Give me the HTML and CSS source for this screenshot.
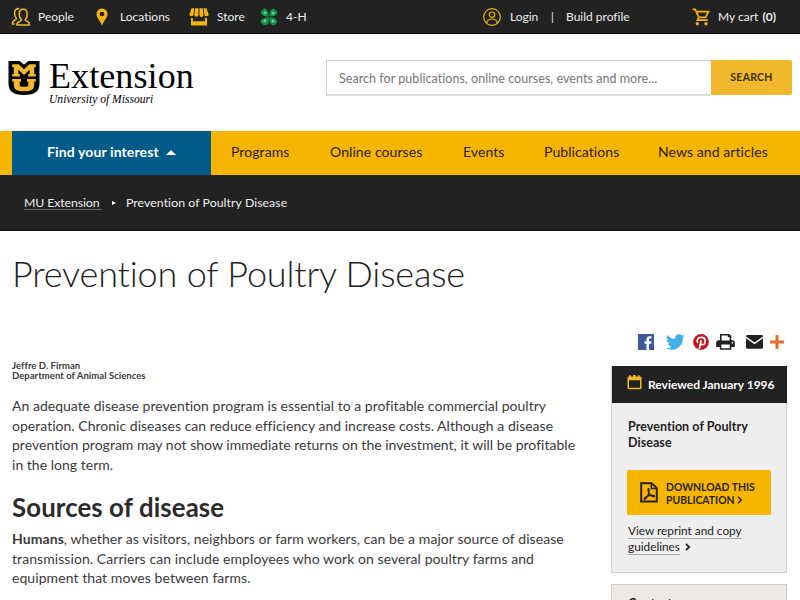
FILE: index.html
```html
<!DOCTYPE html>
<html lang="en">
<head>
<meta charset="utf-8">
<title>Prevention of Poultry Disease</title>
<link rel="stylesheet" href="styles.css">
</head>
<body>
<div class="topbar">
  <a class="top-link people">
    <svg class="icon" width="20" height="20" viewBox="0 0 20 20" fill="none" stroke="#f1b82d" stroke-width="1.5" stroke-linejoin="round"><path d="M9 14.2c1-.5 1.400-.8 1.400-1.500C9.200 11.700 8.200 9.800 8.200 7c0-2.700 1.500-4.800 4-4.800s4 2.100 4 4.800c0 2.800-.8 4.500-2 5.700 0 1 1 1.300 2.300 1.800 1.500.6 2 1.300 2 3.500H5.800c0-2.200.7-3 3.200-3.800z"/><path d="M8.300 1.800C5.500 1 3.600 3.200 3.600 6c0 2.700.7 4.300 1.800 5.400 0 1-.6 1.300-1.900 1.900C2 14 1.300 14.900 1.300 17h2.400"/></svg>
    <span>People</span></a>
  <a class="top-link locations">
    <svg class="icon" width="12" height="18" viewBox="0 0 12 18"><path fill="#f1b310" fill-rule="evenodd" d="M6 .5A5.500 5.500 0 0 0 .5 6C.5 10 3.500 11.500 6 17.500 8.500 11.500 11.500 10 11.500 6A5.500 5.500 0 0 0 6 .5zm0 3.200a2.300 2.300 0 1 1 0 4.600 2.300 2.300 0 0 1 0-4.600z"/></svg>
    <span>Locations</span></a>
  <a class="top-link store">
    <svg class="icon" width="20" height="18" viewBox="0 0 20 18" fill="#f1b310"><path d="M2.600.3h2.700L4.500 7a2.200 2.200 0 0 1-4.200-.6zM6.200.3h3.200V7a2.100 2.100 0 0 1-4.100 0zM10.400.3h3.300l.9 6.700a2.100 2.100 0 0 1-4.200 0zM14.600.3h2.800l2.300 6.100A2.200 2.200 0 0 1 15.500 7z"/><path fill-rule="evenodd" d="M2 10h1.900v3.300h12V10H18v7.600H2z"/></svg>
    <span>Store</span></a>
  <a class="top-link fourh">
    <svg class="icon" width="18" height="18" viewBox="0 0 18 18"><g fill="#119447"><path id="leaf" d="M8.600 8.600C5 8.700.8 7.500.8 4.600c0-1.200.7-1.900 1.600-2C2.300 1.400 3.200.6 4.500.6c2.800 0 4.100 4 4.100 8z"/><use href="#leaf" transform="rotate(90 9 9)"/><use href="#leaf" transform="rotate(180 9 9)"/><use href="#leaf" transform="rotate(270 9 9)"/></g><path d="M8.800 9q0 5-1.800 8" stroke="#119447" fill="none"/><g stroke="#cdebd6" stroke-width=".8"><path id="h" d="M3.600 4.900l1.600-1.600M5 6.300l1.600-1.600M4.300 5.600L5.900 4"/><use href="#h" transform="rotate(90 9 9)"/><use href="#h" transform="rotate(180 9 9)"/><use href="#h" transform="rotate(270 9 9)"/></g></svg>
    <span>4-H</span></a>
  <a class="top-link login">
    <svg class="icon" width="18" height="18" viewBox="0 0 18 18" fill="none" stroke="#f1b310" stroke-width="1.200"><circle cx="9" cy="9" r="8.300"/><circle cx="9" cy="6.700" r="2.700"/><path d="M3.700 15.200c.2-3 2.500-4.200 5.300-4.200s5.100 1.200 5.300 4.200"/></svg>
    <span>Login</span></a>
  <span class="divider">|</span>
  <a class="profile">Build profile</a>
  <a class="top-link cart">
    <svg class="icon" width="18" height="18" viewBox="0 0 18 18"><path d="M.6 1.400h2.600l3.700 8h6.600l3-5.700H4.400M6.900 9.400l-1.500 2.800h10.400" fill="none" stroke="#f1b310" stroke-width="1.700"/><g fill="#f1b310"><circle cx="5.300" cy="15.700" r="1.700"/><circle cx="14" cy="15.700" r="1.700"/></g></svg>
    <span>My cart <b>(0)</b></span></a>
</div>

<header class="header">
  <a class="brand">
    <svg class="shield" width="32" height="36" viewBox="0 0 32 36"><path d="M.5 1h11l4.500 3.500L20.500 1h11v22.500c0 8-5 11.500-15.500 11.500S.5 31.500.5 23.500z"/><g fill="#f1b82d"><path d="M4.200 4.200h6.300L16 9.200l5.500-5h6.300v3h-1.600v6.800h1.600v2.600h-7.600V14h1.500V9.800L16 15l-5.700-5.200V14h1.500v2.600H4.200V14h1.600V7.200H4.200z"/><path d="M4.200 19h8.800v2.800h-1.400v3.200c0 1.300 1.300 1.800 4.400 1.800s4.400-.5 4.400-1.800v-3.200H19V19h8.800v2.800h-1.600v3.600c0 4.200-4 5.900-10.200 5.900S5.800 29.600 5.800 25.400v-3.600H4.200z"/></g></svg>
    <span class="wordmark"><span class="name">Extension</span><span class="school">University of Missouri</span></span>
  </a>
  <form class="search">
    <div class="search-field">Search for publications, online courses, events and more...</div>
    <div class="search-button">SEARCH</div>
  </form>
</header>

<nav class="nav">
  <a class="interest"><span>Find your interest</span><i class="caret"></i></a>
  <a class="n1">Programs</a><a class="n2">Online courses</a><a class="n3">Events</a><a class="n4">Publications</a><a class="n5">News and articles</a>
</nav>

<div class="crumbs"><a class="crumb-link">MU Extension</a><i class="crumb-arrow"></i><span class="crumb-here">Prevention of Poultry Disease</span></div>

<h1 class="title"><span>Prevention of Poultry Disease</span></h1>

<div class="page">
  <main class="content">
    <div class="author">Jeffre D. Firman<br>Department of Animal Sciences</div>
    <p class="copy">An adequate disease prevention program is essential to a profitable commercial poultry<br>operation. Chronic diseases can reduce efficiency and increase costs. Although a disease<br>prevention program may not show immediate returns on the investment, it will be profitable<br>in the long term.</p>
    <h2 class="section-title">Sources of disease</h2>
    <p class="copy"><b>Humans</b>, whether as visitors, neighbors or farm workers, can be a major source of disease<br>transmission. Carriers can include employees who work on several poultry farms and<br>equipment that moves between farms.</p>
  </main>
  <aside class="side">
    <div class="share">
      <svg class="fb" width="16" height="16" viewBox="0 0 16 16"><path fill="#3c5a99" d="M0 0h16v16H0z"/><path fill="#fff" d="M8.500 16V9.700H6.500V7.300h2V5.500c0-2 1.200-3.200 3.100-3.200.9 0 1.700.1 1.900.1v2.200h-1.300c-1 0-1.200.5-1.200 1.200v1.500h2.400l-.3 2.400H11V16z"/></svg>
      <svg class="tw" width="19" height="16" viewBox="0 0 19 16"><path fill="#3fb1e8" d="M18.800 2.200c-.7.300-1.400.5-2.200.6.800-.5 1.400-1.200 1.700-2.100-.8.400-1.600.8-2.500.9A3.850 3.850 0 0 0 9.200 5.100C6 5 3.200 3.400 1.300 1.100A3.850 3.850 0 0 0 2.500 6.300c-.6 0-1.200-.2-1.800-.5 0 1.900 1.300 3.500 3.100 3.900-.6.100-1.100.2-1.700.1.500 1.500 1.900 2.600 3.600 2.700A7.800 7.800 0 0 1 0 14.100C1.700 15.200 3.700 15.800 5.900 15.800 13 15.800 17.100 9.800 16.900 4.200c.7-.5 1.400-1.200 1.900-2z"/></svg>
      <svg class="pin" width="16" height="16" viewBox="0 0 16 16"><circle cx="8" cy="8" r="7.900" fill="#c2161f"/><path fill="none" stroke="#fff" stroke-width="1.600" d="M4.800 9C3 6.500 4.800 3.400 8.200 3.400c2.500 0 4 1.500 4 3.500 0 2.300-1.200 3.800-2.800 3.800-1.200 0-1.800-.8-1.900-1.500"/><path fill="none" stroke="#fff" stroke-width="1.700" d="M8.200 6.200L6.200 15"/></svg>
      <svg class="print" width="19" height="16" viewBox="0 0 19 16"><path fill="#222" fill-rule="evenodd" d="M4 0h9.300l2 2v4.200h1.200c1.400 0 2.300.9 2.300 2.200V13h-3.500v2.800H3.800V13H.2V8.400c0-1.300.9-2.200 2.300-2.200H4zm1.600 1.600v4.900h8.100V3.200h-1.900V1.600zM5.400 10.600v3.600h8.300v-3.600zM15.700 8v1.400h1.400V8z"/></svg>
      <svg class="mail" width="17" height="14" viewBox="0 0 17 14"><path fill="#222" d="M1.500 0h14C16.500 0 17 .6 17 1.400L8.500 7.500 0 1.400C0 .6.600 0 1.500 0zM0 3.300l8.500 6 8.500-6v9c0 .9-.6 1.500-1.500 1.500h-14C.6 13.800 0 13.200 0 12.300z"/></svg>
      <svg class="plus" width="14" height="14" viewBox="0 0 14 14"><path fill="#e0702a" d="M5.500 0h3v5.500H14v3H8.500V14h-3V8.500H0v-3h5.500z"/></svg>
    </div>
    <section class="card">
      <div class="card-head">
        <svg class="calendar" width="15" height="15" viewBox="0 0 15 15"><path fill="#f1b82d" fill-rule="evenodd" d="M2.500 0h1.300v1.400h2.400V0h2.500v1.400h2.400V0h1.300v1.400h.6c1 0 1.500.5 1.500 1.400v10c0 .9-.5 1.400-1.500 1.400H2C1 14.200.5 13.700.5 12.800v-10c0-.9.500-1.400 1.500-1.400h.5zM2 5.300v7.400h11V5.300z"/></svg>
        <span>Reviewed January 1996</span></div>
      <div class="card-body">
        <div class="card-title">Prevention of Poultry<br>Disease</div>
        <a class="download">
          <svg width="18" height="21" viewBox="0 0 18 21" fill="none" stroke="#2b2410"><path stroke-width="2" d="M1.200 1.200h10.600l5 5v13.400H1.200z"/><path stroke-width="1.400" d="M11.300 1.500v5h5.200M8.500 6.800c.9 0 .9 3-.5 6.200-1.200 2.800-2.800 4.800-3.700 4.300-1-.7 2.300-3.200 5.400-3.800 2.600-.5 4.900-.2 4.700.8-.3 1.200-3.700-.3-5.300-3.200C8 9 7.600 6.800 8.500 6.800z"/></svg>
          <span>DOWNLOAD THIS<br>PUBLICATION <svg width="6" height="8" viewBox="0 0 6 8" fill="none" stroke="#2b2410" stroke-width="1.600"><path d="M1 .8l3.200 3.200L1 7.200"/></svg></span>
        </a>
        <div class="reprint"><a>View reprint and copy</a><br><a>guidelines</a> <svg width="6" height="8" viewBox="0 0 6 8" fill="none" stroke="#222" stroke-width="1.800"><path d="M1 .8l3.200 3.200L1 7.200"/></svg></div>
      </div>
    </section>
    <section class="card contact"><div class="card-title">Contact us</div></section>
  </aside>
</div>
</body>
</html>
```
FILE: styles.css
```css
* { box-sizing: border-box; }
html, body { height: 600px; overflow: hidden; }
body { margin: 0; background: #fff; color: #3a3a3a; font-family: Lato, "Liberation Sans", sans-serif; font-variant-ligatures: none; white-space: nowrap; }
svg { display: block; flex: none; }
b { font-weight: 700; }

.topbar { display: flex; height: 34px; padding-left: 11px; background: #222; border-bottom: 1px solid #000; color: #eee; font-size: 12px; line-height: 33px; }
.top-link { display: flex; align-items: center; }
.people { width: 85px; gap: 7px; }
.locations { width: 93px; gap: 12px; }
.store { width: 71px; gap: 8px; }
.fourh { width: 223px; gap: 8px; }
.login { width: 68px; gap: 9px; }
.divider { width: 15px; font-size: 11px; }
.profile { width: 126px; }
.cart { gap: 8px; }
.cart b { margin-left: 1px; }

.header { display: flex; height: 97px; padding-left: 8px; }
.brand { display: flex; width: 318px; padding-top: 26px; color: #000; }
.wordmark { display: flex; flex-direction: column; margin-left: 9px; font-family: "Liberation Serif", serif; }
.name { height: 33px; font-size: 36px; line-height: 33px; letter-spacing: .1px; }
.school { font-size: 11.600px; line-height: 13px; font-style: italic; }
.search { display: flex; margin: 26px 0 0; }
.search-field { width: 385px; height: 36px; padding-left: 12px; border: 1px solid #ccc; border-bottom: 2px solid #ddd; border-right: 0; color: #757575; font-size: 12.500px; line-height: 35px; letter-spacing: .05px; }
.search-button { width: 81px; height: 35px; border-radius: 0 2px 2px 0; background: #f1b82d; color: #3c2e10; font-size: 10.500px; font-weight: 700; line-height: 35px; text-align: center; letter-spacing: .25px; }

.nav { display: flex; height: 44px; padding-left: 12px; background: #f5b500; color: #2a1d05; font-size: 14px; line-height: 42px; letter-spacing: .08px; }
.interest { display: flex; align-items: center; width: 199px; padding: 0 0 2px 35px; margin-right: 20px; background: #005b8b; color: #fff; font-weight: 700; letter-spacing: .12px; }
.caret { margin: 1px 0 0 7px; border: 5px solid transparent; border-top: 0; border-bottom: 5px solid #fff; }
.n1 { width: 99px; }
.n2 { width: 133px; }
.n3 { width: 81px; }
.n4 { width: 114px; }

.crumbs { display: flex; align-items: center; height: 56px; padding-left: 24px; background: #222; border-bottom: 1px solid #111; color: #eee; font-size: 12.300px; }
.crumb-link { width: 78px; height: 15px; line-height: 15px; border-bottom: 1px solid #666; letter-spacing: -.1px; }
.crumb-arrow { margin: 0 10px 0 10px; border: 2.500px solid transparent; border-right: 0; border-left: 4px solid #fff; }
.crumb-here { letter-spacing: .06px; }

.title { margin: 0; height: 101px; padding: 20px 0 0 12px; color: #222; font-size: 36px; font-weight: 300; line-height: 44px; letter-spacing: -.17px; }

.page { display: flex; }
.content { width: 611px; padding: 29px 0 0 12px; }
.author { font-size: 9.500px; font-weight: 700; line-height: 10px; letter-spacing: .04px; }
.copy { margin: 0; padding-top: 15px; font-size: 14px; line-height: 19.500px; letter-spacing: .02px; }
.section-title { margin: 0; padding-top: 18px; height: 51px; color: #2b2b2b; font-size: 25.800px; font-weight: 700; line-height: 30px; letter-spacing: .1px; }
.section-title + .copy { padding-top: 4px; letter-spacing: .07px; }

.side { width: 176px; }
.share { display: flex; align-items: center; height: 34px; padding: 0 0 14px 27px; }
.tw { margin-left: 12px; }
.pin { margin-left: 8px; }
.print { margin-left: 7px; }
.mail { margin-left: 11px; }
.plus { margin-left: 7px; }
.card { height: 207px; border: 1px solid #d0d0d0; background: #eee; }
.card-head { display: flex; gap: 6px; height: 37px; margin: -1px -1px 0 0; padding: 9px 0 0 15px; background: #222; color: #fff; font-size: 12px; font-weight: 700; line-height: 20px; }
.card-body { padding: 16px 15px; }
.card-title { padding-left: 1px; color: #222; font-size: 12.500px; font-weight: 700; line-height: 15.500px; letter-spacing: .05px; }
.download { display: flex; align-items: center; height: 45px; margin-top: 20px; padding-left: 13px; border-radius: 2px; background: #f5b500; color: #2b2410; font-size: 10.400px; font-weight: 700; line-height: 13px; }
.download span { margin: 2px 0 0 8px; }
.download span svg, .reprint svg { display: inline-block; }
.reprint { margin-top: 8px; padding-left: 1px; color: #222; font-size: 11.800px; line-height: 15.500px; }
.reprint a { border-bottom: 1px solid #aaa; }
.reprint svg { margin-left: 2px; }
.contact { height: 100px; margin-top: 11px; padding: 11px 15px; background: #ebe8e6; }
```
